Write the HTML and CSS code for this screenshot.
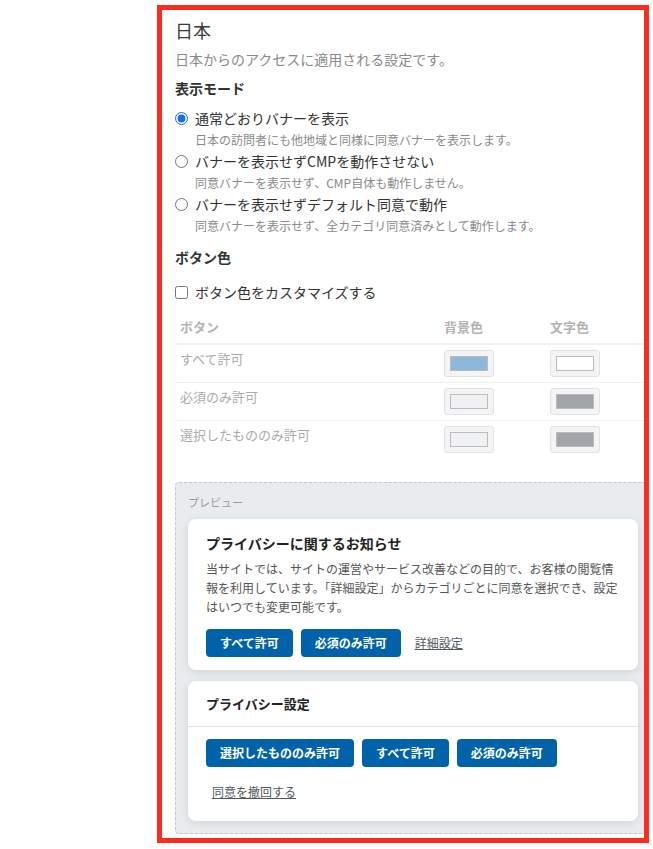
FILE: index.html
```html
<!DOCTYPE HTML>
<html lang="ja">
    <head>
        <meta charset="UTF-8">
        <title>国別設定 - 日本</title>
        <link rel="stylesheet" href="styles.css">
    </head>
    <body>
        <div class="frame">
            <div class="region">
                <h2 class="region-title">日本</h2>
                <p class="region-note">日本からのアクセスに適用される設定です。</p>

                <h3 class="field-title">表示モード</h3>
                <div class="mode-list">
                    <label class="mode">
                        <span class="mode-main"><input type="radio" name="jp_mode" value="banner" checked>通常どおりバナーを表示</span>
                        <span class="mode-desc">日本の訪問者にも他地域と同様に同意バナーを表示します。</span>
                    </label>
                    <label class="mode">
                        <span class="mode-main"><input type="radio" name="jp_mode" value="off">バナーを表示せずCMPを動作させない</span>
                        <span class="mode-desc">同意バナーを表示せず、CMP自体も動作しません。</span>
                    </label>
                    <label class="mode">
                        <span class="mode-main"><input type="radio" name="jp_mode" value="implied">バナーを表示せずデフォルト同意で動作</span>
                        <span class="mode-desc">同意バナーを表示せず、全カテゴリ同意済みとして動作します。</span>
                    </label>
                </div>

                <h3 class="field-title field-title-color">ボタン色</h3>
                <label class="check"><input type="checkbox" name="jp_custom_color">ボタン色をカスタマイズする</label>

                <!-- チェックが外れている間は薄く表示 -->
                <table class="color-table">
                    <thead>
                        <tr><th>ボタン</th><th>背景色</th><th>文字色</th></tr>
                    </thead>
                    <tbody>
                        <tr>
                            <td>すべて許可</td>
                            <td><span class="swatch"><i class="sw-blue"></i></span></td>
                            <td><span class="swatch"><i class="sw-white"></i></span></td>
                        </tr>
                        <tr>
                            <td>必須のみ許可</td>
                            <td><span class="swatch"><i class="sw-light"></i></span></td>
                            <td><span class="swatch"><i class="sw-gray"></i></span></td>
                        </tr>
                        <tr>
                            <td>選択したもののみ許可</td>
                            <td><span class="swatch"><i class="sw-light"></i></span></td>
                            <td><span class="swatch"><i class="sw-gray"></i></span></td>
                        </tr>
                    </tbody>
                </table>

                <div class="preview">
                    <p class="preview-label">プレビュー</p>

                    <div class="card notice">
                        <h4 class="notice-title">プライバシーに関するお知らせ</h4>
                        <p class="notice-text">当サイトでは、サイトの運営やサービス改善などの目的で、お客様の閲覧情報を利用しています。「詳細設定」からカテゴリごとに同意を選択でき、設定はいつでも変更可能です。</p>
                        <div class="actions">
                            <button class="btn">すべて許可</button>
                            <button class="btn">必須のみ許可</button>
                            <button class="link-btn">詳細設定</button>
                        </div>
                    </div>

                    <div class="card settings">
                        <div class="settings-head">プライバシー設定</div>
                        <div class="settings-body">
                            <div class="actions">
                                <button class="btn">選択したもののみ許可</button>
                                <button class="btn">すべて許可</button>
                                <button class="btn">必須のみ許可</button>
                            </div>
                            <button class="link-btn withdraw">同意を撤回する</button>
                        </div>
                    </div>
                </div>
            </div>
        </div>
    </body>
</html>
```

FILE: styles.css
```css
body{margin:0;font-family:"Noto Sans CJK JP","Noto Sans",sans-serif;color:#333;background:#fff;}
h2,h3,h4,p{margin:0;}
button{margin:0;font-family:inherit;cursor:pointer;}

.frame{
    width:492px;
    height:838px;
    margin:5px 0 0 157px;
    border:5px solid #fd2a1f;
    box-sizing:border-box;
    overflow:hidden; /*右端ははみ出した分を切る*/
    background:#fff;
}
.region{
    width:476px;
    padding:8px 0 0 13px;
}
.region-title{
    font-size:18px;
    font-weight:normal;
    line-height:24px;
    color:#3a3a3a;
}
.region-note{
    margin-top:7px;
    font-size:14px;
    line-height:20px;
    color:#8a8a8a;
}
.field-title{
    margin-top:9px;
    font-size:14px;
    line-height:20px;
    font-weight:bold;
    color:#333;
}
.field-title-color{
    margin-top:12px;
}

/* 表示モード */
.mode-list{
    margin-top:10px;
}
.mode{
    display:block;
    margin-bottom:2px;
}
.mode-main{
    display:flex;
    align-items:center;
    font-size:14px;
    line-height:20px;
    color:#333;
}
.mode-main input,
.check input{
    width:13px;
    height:13px;
    margin:0 7px 0 0;
    flex:none;
    accent-color:#1a6cf0;
}
.mode-desc{
    display:block;
    margin-top:3px;
    padding-left:20px;
    font-size:12px;
    line-height:18px;
    color:#8a8a8a;
}

.check{
    display:flex;
    align-items:center;
    margin-top:15px;
    font-size:14px;
    line-height:20px;
    color:#333;
}

/* ボタン色テーブル（無効時の薄い表示） */
.color-table{
    width:100%;
    margin-top:9px;
    border-collapse:collapse;
    table-layout:fixed;
}
.color-table th{
    padding:6px 5px;
    font-size:13px;
    line-height:20px;
    font-weight:bold;
    text-align:left;
    color:#b3b3b3;
    border-bottom:2px solid #f1f1f1;
}
.color-table th:nth-child(2),
.color-table th:nth-child(3){
    width:96px;
}
.color-table td{
    padding:5px;
    font-size:13px;
    line-height:18px;
    color:#ababab;
    vertical-align:top;
    border-bottom:1px solid #f0f0f0;
}
.color-table tr:last-child td{
    border-bottom:none;
}
.swatch{
    display:block;
    width:50px;
    height:27px;
    padding:5px;
    box-sizing:border-box;
    background:#f4f4f4;
    border:1px solid #e2e2e2;
    border-radius:3px;
}
.swatch i{
    display:block;
    height:100%;
    box-sizing:border-box;
    border:1px solid #bcbcbc;
}
.sw-blue{background:#8cb9d8;}
.sw-white{background:#fff;}
.sw-light{background:#f0f1f4;}
.sw-gray{background:#a2a5aa;}

/* プレビュー */
.preview{
    margin-top:24px;
    padding:12px;
    border:1px dashed #c3c7cc;
    border-radius:4px;
    background:#e9ecef;
}
.preview-label{
    font-size:11px;
    line-height:14px;
    color:#9a9a9a;
}
.card{
    background:#fff;
    border-radius:8px;
    box-shadow:0 2px 8px rgba(0,0,0,.1);
}
.notice{
    margin-top:10px;
    padding:14px 18px 13px;
}
.notice-title{
    font-size:14px;
    line-height:20px;
    font-weight:bold;
    color:#222;
}
.notice-text{
    margin-top:6px;
    font-size:12px;
    line-height:19.2px;
    color:#555;
}
.actions{
    display:flex;
    align-items:center;
    gap:8px;
}
.notice .actions{
    margin-top:12px;
}
.btn{
    height:28px;
    padding:0 14px;
    border:0;
    border-radius:4px;
    background:#0063a9;
    color:#fff;
    font-size:12px;
    font-weight:bold;
    line-height:28px;
}
.link-btn{
    padding:5px 6px;
    border:0;
    background:none;
    color:#50575e;
    font-size:12px;
    line-height:18px;
    text-decoration:underline;
}
.settings{
    margin-top:11px;
}
.settings-head{
    padding:14px 18px 13px;
    font-size:13px;
    line-height:18px;
    font-weight:bold;
    color:#222;
    border-bottom:1px solid #e3e5e8;
}
.settings-body{
    padding:12px 18px 15px;
}
.withdraw{
    display:block;
    margin-top:11px;
}
```
